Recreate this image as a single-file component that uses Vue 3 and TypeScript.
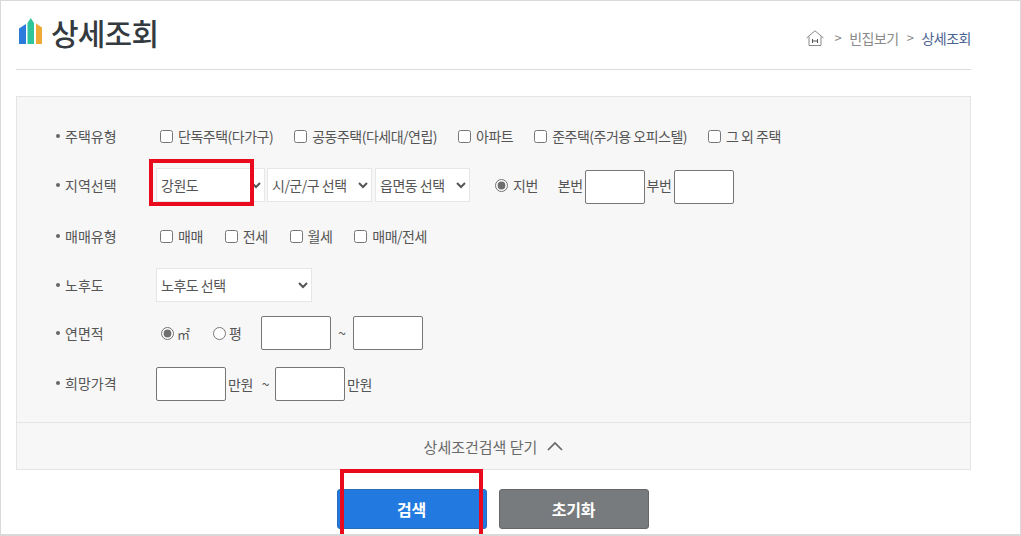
<script setup lang="ts">
const houseTypes: string[] = ['단독주택(다가구)', '공동주택(다세대/연립)', '아파트', '준주택(주거용 오피스텔)', '그 외 주택']
const dealTypes: string[] = ['매매', '전세', '월세', '매매/전세']
</script>

<template>
  <div class="page">
    <header class="head">
      <h1 class="title">
        <svg class="logo" width="24" height="27" viewBox="0 0 24 27">
          <path d="M0 10.5 L7 6 V26 H0 Z" fill="#2b7bdc" />
          <path d="M8.500 5 L11.700 0 L15 5 V26 H8.500 Z" fill="#2ec59a" />
          <path d="M17 5.500 L23 9.500 V26 H17 Z" fill="#efaa36" />
        </svg>
        상세조회
      </h1>
      <nav class="crumbs">
        <svg class="home" width="18" height="16" viewBox="0 0 18 16" fill="none" stroke="#8a8a8a" stroke-width="1">
          <path d="M0.500 8 L9 0.800 L17.500 8" />
          <path d="M3 6.500 V15.500 H15 V6.500" />
          <path d="M6.500 9 V13 M11.500 9 V13 M6.500 11 H11.500" stroke="#555" />
        </svg>
        <span class="sep">&gt;</span>
        <span>빈집보기</span>
        <span class="sep">&gt;</span>
        <span class="current">상세조회</span>
      </nav>
    </header>

    <section class="panel">
      <div class="form">
        <div class="row">
          <div class="label">주택유형</div>
          <div class="field gap-checks">
            <label v-for="t in houseTypes" :key="t" class="check"><input type="checkbox" />{{ t }}</label>
          </div>
        </div>
        <div class="row">
          <div class="label">지역선택</div>
          <div class="field region">
            <select class="sel sel-province"><option>강원도</option></select>
            <select class="sel sel-city"><option>시/군/구 선택</option></select>
            <select class="sel sel-town"><option>읍면동 선택</option></select>
            <label class="radio jibun"><input type="radio" name="lot" checked />지번</label>
            <span class="main-no">본번</span>
            <input class="box small" type="text" />
            <span class="sub-no">부번</span>
            <input class="box small" type="text" />
          </div>
        </div>
        <div class="row">
          <div class="label">매매유형</div>
          <div class="field gap-deals">
            <label v-for="t in dealTypes" :key="t" class="check"><input type="checkbox" />{{ t }}</label>
          </div>
        </div>
        <div class="row">
          <div class="label">노후도</div>
          <div class="field">
            <select class="sel sel-age"><option>노후도 선택</option></select>
          </div>
        </div>
        <div class="row">
          <div class="label">연면적</div>
          <div class="field area">
            <label class="radio unit-m"><input type="radio" name="unit" checked />㎡</label>
            <label class="radio unit-p"><input type="radio" name="unit" />평</label>
            <input class="box" type="text" />
            <span class="tilde">~</span>
            <input class="box" type="text" />
          </div>
        </div>
        <div class="row">
          <div class="label">희망가격</div>
          <div class="field price">
            <input class="box" type="text" />
            <span>만원</span>
            <span class="tilde-p">~</span>
            <input class="box" type="text" />
            <span>만원</span>
          </div>
        </div>
      </div>
      <div class="toggle">
        상세조건검색 닫기
        <svg width="16" height="10" viewBox="0 0 16 10" fill="none" stroke="#666" stroke-width="1.700">
          <path d="M1 9 L8 2 L15 9" />
        </svg>
      </div>
    </section>

    <div class="actions">
      <button class="btn primary" type="button">검색</button>
      <button class="btn secondary" type="button">초기화</button>
    </div>

    <div class="mark mark-region"></div>
    <div class="mark mark-search"></div>
  </div>
</template>

<style>
html, body { margin: 0; background: #fff; }
</style>

<style scoped>
.page {
  position: relative;
  box-sizing: border-box;
  width: 1021px;
  height: 536px;
  padding: 0 49px 0 15px;
  border: 1px solid #d9d9d9;
  border-width: 1px 1px 2px 1px;
  overflow: hidden;
  font-family: "Noto Sans CJK KR", "Noto Sans", sans-serif;
  font-size: 14px;
  letter-spacing: -0.5px;
  color: #555;
}
.head {
  display: flex;
  justify-content: space-between;
  height: 68px;
  border-bottom: 1px solid #dcdcdc;
}
.title {
  display: flex;
  align-items: center;
  gap: 8px;
  height: 61px;
  margin: 0 0 0 3px;
  font-size: 30px;
  font-weight: 500;
  letter-spacing: -0.8px;
  color: #333a40;
}
.logo { width: 24px; height: 27px; }
.crumbs {
  display: flex;
  align-items: center;
  gap: 7px;
  height: 73px;
  color: #8a8a8a;
  font-size: 14px;
}
.home { margin-right: 3px; }
.sep { font-size: 13px; margin: 0 1px; }
.current { color: #4a6390; }
.panel {
  margin-top: 26px;
  height: 374px;
  box-sizing: border-box;
  background: #f7f7f7;
  border: 1px solid #e4e4e4;
  display: flex;
  flex-direction: column;
}
.form {
  flex: 1;
  padding: 15px 0 0 38px;
  display: grid;
  grid-template-rows: 48px 50px 52px 46px 50px 50px;
  align-content: start;
}
.row { display: flex; align-items: center; }
.label {
  position: relative;
  width: 101px;
  padding-left: 10px;
  box-sizing: border-box;
  color: #555;
  letter-spacing: 0;
}
.label::before {
  content: "";
  position: absolute;
  left: 1px;
  top: 50%;
  width: 4px;
  height: 4px;
  margin-top: -2px;
  border-radius: 50%;
  background: #666;
}
.field { display: flex; align-items: center; }
.gap-checks { gap: 21px; padding-left: 4px; }
.gap-deals { gap: 22px; padding-left: 4px; }
.check, .radio { display: flex; align-items: center; white-space: nowrap; }
.check input { width: 13px; height: 13px; margin: 0 5px 0 0; }
.radio input { width: 13px; height: 13px; margin: 0 5px 0 0; accent-color: #6f6f6f; }
.sel {
  height: 34px;
  box-sizing: border-box;
  border: 1px solid #e6e6e6;
  border-radius: 0;
  background: #fff;
  color: #555;
  font: inherit;
  letter-spacing: inherit;
  padding: 0;
  outline: none;
}
.sel-province { width: 109px; }
.sel-city { width: 105px; margin-left: 2px; }
.sel-town { width: 95px; margin-left: 3px; }
.sel-age { width: 156px; }
.jibun { margin-left: 25px; }
.main-no { margin-left: 20px; margin-right: 2px; }
.sub-no { margin-right: 3px; }
.box {
  box-sizing: border-box;
  width: 70px;
  height: 34px;
  border: 1px solid #767676;
  border-radius: 2px;
  background: #fff;
  padding: 0;
}
.small { width: 60px; margin: 4px 2px 0 0; }
.area { padding-left: 5px; }
.unit-m { width: 52px; font-size: 13px; }
.unit-m input, .unit-p input { margin-right: 3px; }
.unit-p { width: 48px; }
.tilde { width: 22px; text-align: center; }
.price { margin-top: 2px; }
.price span { margin-left: 2px; }
.price .tilde-p { margin: 0 6px 0 9px; }
.toggle {
  height: 47px;
  box-sizing: border-box;
  border-top: 1px solid #e4e4e4;
  display: flex;
  align-items: center;
  justify-content: center;
  gap: 10px;
  color: #6a6a6a;
  font-size: 15px;
  letter-spacing: 0;
}
.actions {
  display: flex;
  justify-content: center;
  gap: 12px;
  margin-top: 19px;
  padding-right: 2px;
}
.btn {
  width: 150px;
  height: 40px;
  border-radius: 3px;
  font: inherit;
  font-weight: 700;
  letter-spacing: -0.2px;
  font-size: 16px;
  color: #fff;
  border: 1px solid transparent;
}
.primary { background: #2279e0; border-color: #2c6fb8; }
.secondary { background: #777b7e; border-color: #666; }
.mark { position: absolute; border: 4px solid #ea0a1e; box-sizing: border-box; pointer-events: none; }
.mark-region { left: 148px; top: 158px; width: 105px; height: 47px; }
.mark-search { left: 339px; top: 468px; width: 143px; height: 80px; }
</style>
